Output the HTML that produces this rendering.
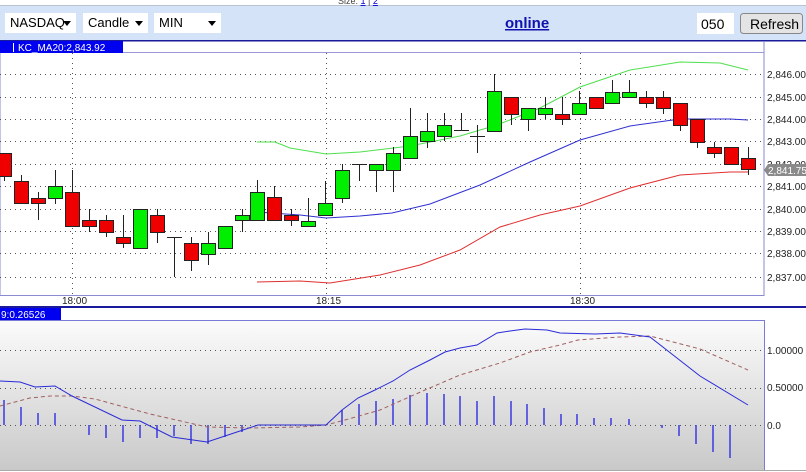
<!DOCTYPE html>
<html><head><meta charset="utf-8"><style>
html,body{margin:0;padding:0;width:806px;height:472px;overflow:hidden;background:#fff;font-family:"Liberation Sans",sans-serif}
svg{position:absolute;left:0;top:0}
.sel{position:absolute;top:13px;height:20px;background:#fff;font-size:13px;line-height:20px;padding-left:5px;box-sizing:border-box;color:#000}
.sel:after{content:"";position:absolute;right:5px;top:8px;border-left:4px solid transparent;border-right:4px solid transparent;border-top:5px solid #000}
</style></head><body>
<svg width="806" height="472" xmlns="http://www.w3.org/2000/svg" font-family="Liberation Sans, sans-serif">
<defs><linearGradient id="g" x1="0" y1="0" x2="0" y2="1"><stop offset="0" stop-color="#fbfbfb"/><stop offset="1" stop-color="#c9c9c9"/></linearGradient></defs>
<rect x="0" y="0" width="806" height="5" fill="#fff"/>
<line x1="0" y1="5.5" x2="806" y2="5.5" stroke="#b8c4d4"/>
<rect x="0" y="6" width="806" height="34" fill="#d4e3f7"/>
<text x="338" y="4" font-size="9" fill="#444">Size: <tspan fill="#00c" text-decoration="underline">1</tspan> | <tspan fill="#00c" text-decoration="underline">2</tspan></text>
<text x="505" y="28" font-size="15" font-weight="bold" fill="#1010b0" text-decoration="underline">online</text>
<rect x="697" y="13" width="37" height="21" fill="#fff"/>
<text x="701" y="29" font-size="14">050</text>
<rect x="740.5" y="13.5" width="62" height="20" rx="3" fill="#e4e4e4" stroke="#888"/>
<text x="750" y="29" font-size="14">Refresh</text>
<rect x="0" y="40" width="806" height="1.5" fill="#1a1a9a"/>
<rect x="0" y="41.5" width="764" height="254" fill="#fff" stroke="#8a8ad0"/>
<line x1="0" y1="52.5" x2="764" y2="52.5" stroke="#9a9ad8"/>
<rect x="0" y="41" width="123" height="12" fill="#0000f0"/>
<line x1="13.5" y1="43" x2="13.5" y2="52" stroke="#fff"/>
<text x="18" y="51" font-size="10" fill="#fff">KC_MA20:2,843.92</text>
<g stroke="#555" stroke-dasharray="1,4" stroke-width="1">
<line x1="0" x2="764" y1="74.5" y2="74.5"/><line x1="0" x2="764" y1="97.5" y2="97.5"/><line x1="0" x2="764" y1="119.5" y2="119.5"/><line x1="0" x2="764" y1="141.5" y2="141.5"/><line x1="0" x2="764" y1="164.5" y2="164.5"/><line x1="0" x2="764" y1="186.5" y2="186.5"/><line x1="0" x2="764" y1="209.5" y2="209.5"/><line x1="0" x2="764" y1="231.5" y2="231.5"/><line x1="0" x2="764" y1="253.5" y2="253.5"/><line x1="0" x2="764" y1="277.5" y2="277.5"/>
<line x1="72.5" x2="72.5" y1="53" y2="295"/><line x1="326.5" x2="326.5" y1="53" y2="295"/><line x1="580.5" x2="580.5" y1="53" y2="295"/>
<line x1="72.5" x2="72.5" y1="321" y2="470"/><line x1="326.5" x2="326.5" y1="321" y2="470"/><line x1="580.5" x2="580.5" y1="321" y2="470"/>
</g>
<g font-size="10" fill="#222">
<text x="767" y="78">2,846.00</text><text x="767" y="101">2,845.00</text><text x="767" y="123">2,844.00</text><text x="767" y="145">2,843.00</text><text x="767" y="168">2,842.00</text><text x="767" y="190">2,841.00</text><text x="767" y="213">2,840.00</text><text x="767" y="235">2,839.00</text><text x="767" y="257">2,838.00</text><text x="767" y="281">2,837.00</text>
<text x="62" y="304">18:00</text><text x="316" y="304">18:15</text><text x="570" y="304">18:30</text>
</g>
<polygon points="764,170 768,164 806,164 806,176 768,176" fill="#8a8a8a"/>
<text x="768" y="174" font-size="10" fill="#fff">2,841.75</text>
<polyline fill="none" stroke="#4ee04e" points="257,142 275,142 290,148 326,154 360,152 410,146 460,136 497,125 540,108 580,87 630,70 680,62 720,63 748,70"/>
<polyline fill="none" stroke="#3030d0" points="257,212 300,215 326,218 360,216 392,213 430,204 480,185 530,162 580,140 630,126 680,119 730,119 748,120"/>
<polyline fill="none" stroke="#e03030" points="257,282 300,281 330,283 380,275 420,265 460,250 500,227 540,215 580,206 630,188 680,175 730,172 748,172"/>
<g id="candles" stroke="#222" stroke-width="1"></g>
<rect x="0" y="306" width="806" height="2" fill="#1a1a9a"/>
<rect x="0" y="308" width="764" height="12" fill="#fff"/>
<line x1="0" y1="320.5" x2="764" y2="320.5" stroke="#7a7ad8"/>
<rect x="0" y="308" width="61" height="12" fill="#0000f0"/>
<text x="1" y="318" font-size="10" fill="#fff">9:0.26526</text>
<rect x="0" y="321" width="806" height="151" fill="#fff"/>
<rect x="0" y="321" width="764" height="149" fill="url(#g)"/>
<line x1="764.5" y1="320" x2="764.5" y2="470" stroke="#7a7ad8"/>
<line x1="0" y1="470.5" x2="806" y2="470.5" stroke="#aaa"/>
<g stroke="#555" stroke-dasharray="1,4"><line x1="0" x2="764" y1="350.5" y2="350.5"/><line x1="0" x2="764" y1="388.5" y2="388.5"/><line x1="0" x2="764" y1="425.5" y2="425.5"/></g>
<g font-size="10" fill="#222"><text x="767" y="354">1.00000</text><text x="767" y="391">0.50000</text><text x="767" y="429">0.0</text></g>
<g id="bars" stroke="#3a3ae0" stroke-width="1.5"></g>
<polyline fill="none" stroke="#a06060" stroke-dasharray="4,3" points="0,406 30,398 50,396 72,396 95,399 150,414 207,427 250,428 300,427 326,425 345,420 380,410 425,390 460,375 500,363 530,352 560,345 578,340 620,337 650,336 700,349 748,370"/>
<polyline fill="none" stroke="#2a2ad8" points="0,381 20,382 35,387 55,386 72,396 122,420 140,421 172,437 207,442 240,431 258,425 326,425 342,410 358,398 375,390 393,381 410,370 430,360 445,352 460,348 477,345 497,333 510,331 525,329 547,330 560,333 595,334 620,333 650,337 700,376 748,405"/>
</svg>
<div class="sel" style="left:5px;width:71px">NASDAQ</div>
<div class="sel" style="left:83px;width:65px">Candle</div>
<div class="sel" style="left:154px;width:67px">MIN</div>
<script>
var C=[[4,153,176,153,181,'r'],[21,181,203,175,203,'r'],[38,198,203,192,220,'r'],[55,186,198,170,204,'g'],[72,192,226,170,226,'r'],[89,220,226,209,232,'r'],[106,220,232,215,237,'r'],[123,237,243,215,248,'r'],[140,209,248,209,248,'g'],[157,215,232,209,243,'r'],[174,237,237,237,277,'d'],[191,243,260,237,271,'r'],[208,243,254,232,265,'g'],[225,226,248,226,248,'g'],[242,215,220,209,232,'g'],[257,192,220,180,220,'g'],[274,197,220,186,220,'r'],[291,215,220,209,226,'r'],[308,221,226,198,226,'g'],[325,203,215,181,215,'g'],[342,170,198,164,203,'g'],[359,164,164,164,181,'d'],[376,164,170,164,192,'g'],[393,153,170,147,192,'g'],[410,136,158,108,158,'g'],[427,131,141,113,148,'g'],[444,125,136,113,141,'g'],[461,130,130,113,130,'d'],[477,136,136,125,153,'d'],[494,91,131,74,131,'g'],[511,97,114,97,125,'r'],[528,108,119,108,131,'g'],[545,108,114,97,119,'g'],[562,114,119,97,125,'r'],[579,103,114,91,114,'g'],[596,97,108,97,108,'r'],[612,92,103,80,103,'g'],[629,92,97,80,97,'g'],[646,97,103,91,108,'r'],[663,97,108,91,114,'r'],[680,103,125,103,131,'r'],[697,119,142,119,148,'r'],[714,147,153,142,158,'r'],[731,147,164,147,164,'r'],[748,158,169,147,175,'r']];
var s='';C.forEach(function(c){var x=c[0];s+='<line x1="'+(x+.5)+'" x2="'+(x+.5)+'" y1="'+c[3]+'" y2="'+c[4]+'"/>';if(c[5]=='d'){s+='<line x1="'+(x-7)+'" x2="'+(x+8)+'" y1="'+(c[1]+.5)+'" y2="'+(c[1]+.5)+'"/>';}else{var h=Math.max(c[2]-c[1],3);s+='<rect x="'+(x-6.5)+'" y="'+(c[1]+.5)+'" width="14" height="'+h+'" fill="'+(c[5]=='g'?'#00ee00':'#ee0000')+'"/>';}});
document.getElementById('candles').innerHTML=s;
var B=[[4,400],[21,407],[38,413],[55,413],[89,435],[106,438],[123,442],[140,438],[157,438],[174,436],[191,444],[208,444],[225,437],[242,432],[342,410],[359,404],[376,401],[393,399],[410,395],[427,393],[444,394],[460,396],[477,401],[494,396],[511,401],[527,404],[544,408],[561,414],[577,414],[594,418],[611,418],[629,419],[662,428],[679,436],[696,444],[713,452],[730,458]];
var t='';B.forEach(function(b){t+='<line x1="'+b[0]+'" x2="'+b[0]+'" y1="425" y2="'+b[1]+'"/>';});
document.getElementById('bars').innerHTML=t;
</script>
</body></html>
